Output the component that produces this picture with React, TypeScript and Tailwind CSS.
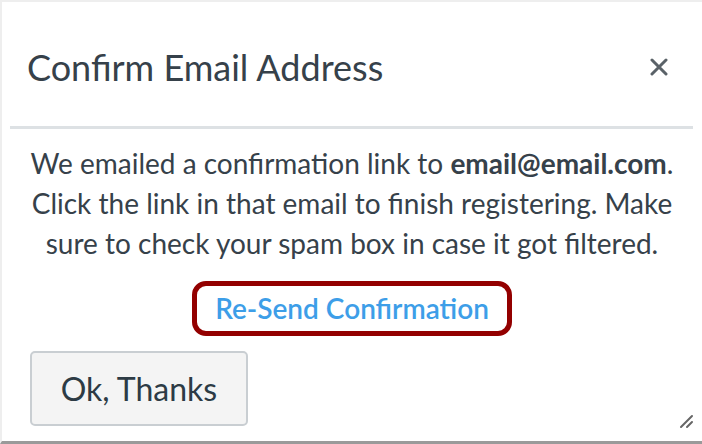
export default function App() {
  return (
    <div
      className="relative flex h-[444px] w-[702px] flex-col border-t-2 border-b-[3px] border-l-2 border-t-[#eeeeee] border-b-[#9a9a9a] border-l-[#eeeeee] bg-white text-[#36414a]"
      style={{ fontFamily: "Lato, 'Noto Sans', sans-serif" }}
    >
      <header className="flex h-[124px] items-center justify-between pl-[25px] pr-[34px] pt-[6px]">
        <h1 className="text-[36px] font-normal leading-none">Confirm Email Address</h1>
        <button type="button" aria-label="Close" className="text-[#5a6268]">
          <svg width="18" height="18" viewBox="0 0 18 18" fill="none" stroke="currentColor" strokeWidth="3" strokeLinecap="round">
            <path d="M2 2l14 14M16 2L2 16" />
          </svg>
        </button>
      </header>
      <div className="ml-[8px] mr-[9px] h-[3px] bg-[#dde1e4]" />
      <div className="flex flex-col items-center px-[10px] pt-[14px] text-center">
        <p className="text-[28px] leading-[40px]">
          We emailed a confirmation link to <span className="font-bold">email@email.com</span>.
          <br />
          Click the link in that email to finish registering. Make
          <br />
          sure to check your spam box in case it got filtered.
        </p>
        <button
          type="button"
          className="mt-[18px] rounded-[14px] border-[5px] border-[#930000] px-[18px] py-[5px] text-[28px] font-semibold leading-[35px] text-[#3d9ee8]"
        >
          Re-Send Confirmation
        </button>
      </div>
      <div className="px-[28px] pt-[15px]">
        <button
          type="button"
          className="h-[75px] w-[218px] rounded-[5px] border-2 border-[#c9ced2] bg-[#f4f4f4] text-[32px] leading-none text-[#2d3b45]"
        >
          Ok, Thanks
        </button>
      </div>
      <svg
        className="absolute bottom-[12px] right-[8px] text-[#666]"
        width="16"
        height="16"
        viewBox="0 0 16 16"
        stroke="currentColor"
        strokeWidth="2"
        strokeLinecap="round"
      >
        <path d="M14 3L3 14M14 9L9 14" />
      </svg>
    </div>
  );
}
